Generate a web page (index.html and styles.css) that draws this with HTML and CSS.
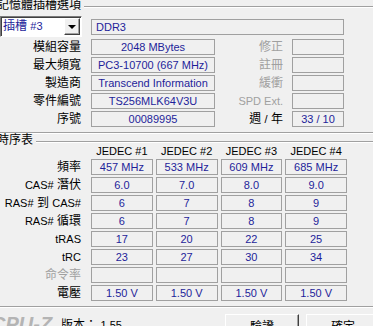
FILE: index.html
```html
<!DOCTYPE html>
<html lang="zh-Hant">
<head>
  <meta charset="UTF-8">
  <title>CPU-Z - SPD</title>
  <link rel="stylesheet" href="styles.css">
</head>
<body>
  <div class="window">

    <!-- 記憶體插槽選項 -->
    <section class="group slot-group">
      <div class="legend"><span>記憶體插槽選項</span></div>

      <div class="slot-row">
        <div class="combo">
          <div class="combo-value">插槽 <span class="en">#3</span></div>
          <div class="combo-btn"><span class="arrow"></span></div>
        </div>
        <div class="box left type">DDR3</div>
      </div>

      <div class="spd-grid">
        <div class="label">模組容量</div>
        <div class="box">2048 MBytes</div>
        <div class="label side off">修正</div>
        <div class="box"></div>

        <div class="label">最大頻寬</div>
        <div class="box">PC3-10700 (667 MHz)</div>
        <div class="label side off">註冊</div>
        <div class="box"></div>

        <div class="label">製造商</div>
        <div class="box">Transcend Information</div>
        <div class="label side off">緩衝</div>
        <div class="box"></div>

        <div class="label">零件編號</div>
        <div class="box">TS256MLK64V3U</div>
        <div class="label side off"><span class="en">SPD Ext.</span></div>
        <div class="box"></div>

        <div class="label">序號</div>
        <div class="box">00089995</div>
        <div class="label side">週 <span class="en">/</span> 年</div>
        <div class="box">33 / 10</div>
      </div>
    </section>

    <!-- 時序表 -->
    <section class="group timing-group">
      <div class="legend"><span>時序表</span></div>

      <div class="jedec-head">
        <div></div>
        <div>JEDEC #1</div>
        <div>JEDEC #2</div>
        <div>JEDEC #3</div>
        <div>JEDEC #4</div>
      </div>

      <div class="timing-grid">
        <div class="label">頻率</div>
        <div class="box">457 MHz</div>
        <div class="box">533 MHz</div>
        <div class="box">609 MHz</div>
        <div class="box">685 MHz</div>

        <div class="label"><span class="en">CAS#</span> 潛伏</div>
        <div class="box">6.0</div>
        <div class="box">7.0</div>
        <div class="box">8.0</div>
        <div class="box">9.0</div>

        <div class="label"><span class="en">RAS#</span> 到 <span class="en">CAS#</span></div>
        <div class="box">6</div>
        <div class="box">7</div>
        <div class="box">8</div>
        <div class="box">9</div>

        <div class="label"><span class="en">RAS#</span> 循環</div>
        <div class="box">6</div>
        <div class="box">7</div>
        <div class="box">8</div>
        <div class="box">9</div>

        <div class="label"><span class="en">tRAS</span></div>
        <div class="box">17</div>
        <div class="box">20</div>
        <div class="box">22</div>
        <div class="box">25</div>

        <div class="label"><span class="en">tRC</span></div>
        <div class="box">23</div>
        <div class="box">27</div>
        <div class="box">30</div>
        <div class="box">34</div>

        <div class="label off">命令率</div>
        <div class="box"></div>
        <div class="box"></div>
        <div class="box"></div>
        <div class="box"></div>

        <div class="label">電壓</div>
        <div class="box">1.50 V</div>
        <div class="box">1.50 V</div>
        <div class="box">1.50 V</div>
        <div class="box">1.50 V</div>
      </div>
    </section>

    <!-- Bas de fenêtre -->
    <footer class="footer">
      <div class="logo">CPU-Z</div>
      <div class="version">版本： <span class="en">1.55</span></div>
      <div class="buttons">
        <button class="btn">驗證</button>
        <button class="btn">確定</button>
      </div>
    </footer>

  </div>
</body>
</html>
```

FILE: styles.css
```css
/* Reset */
* {
  box-sizing: border-box;
  margin: 0;
  padding: 0;
}
html, body {
  width: 373px;
  height: 326px;
  overflow: hidden;
}
body {
  background: #f0f0f0;
  color: #000;
  font-family: "Liberation Sans", "Noto Sans CJK TC", sans-serif;
  font-size: 12px;
}
.window {
  width: 380px;
}
.en {
  font-size: 11px;
}

/* Titres de groupe avec ligne gravée */
.legend {
  display: flex;
  height: 14px;
  line-height: 14px;
  white-space: nowrap;
}
.legend span {
  margin-top: -2px;
  margin-left: -3px;
  padding-right: 3px;
}
.legend::after {
  content: "";
  flex: 1;
  height: 0;
  margin-top: 6px;
  border-top: 1px solid #a0a0a0;
  border-bottom: 1px solid #fff;
}

.group {
  padding-bottom: 5px;
  border-bottom: 1px solid #a0a0a0;
  box-shadow: 0 1px 0 #fff;
}

/* Champs de valeur */
.box {
  height: 16px;
  border: 1px solid #a0a0a0;
  line-height: 14px;
  font-size: 11px;
  color: #1e1e9a;
  text-align: center;
  white-space: nowrap;
  overflow: hidden;
}
.box.left {
  text-align: left;
  padding-left: 4px;
}
.label {
  text-align: right;
  line-height: 16px;
  white-space: nowrap;
}
.off {
  color: #a0a0a0;
}

/* Sélecteur d'emplacement */
.slot-row {
  display: flex;
  height: 21px;
  margin-top: 2px;
}
.combo {
  display: flex;
  width: 82px;
  height: 21px;
  background: #fff;
  border: 1px solid;
  border-color: #7a7a7a #fff #fff #7a7a7a;
  box-shadow: inset 1px 1px 0 #404040;
  padding: 1px 1px 1px 1px;
}
.combo-value {
  flex: 1;
  padding-left: 1px;
  line-height: 17px;
  color: #1e1e9a;
  white-space: nowrap;
}
.combo-btn {
  width: 16px;
  height: 17px;
  display: flex;
  align-items: center;
  justify-content: center;
  background: #f0f0f0;
  border: 1px solid;
  border-color: #fff #404040 #404040 #fff;
  box-shadow: inset -1px -1px 0 #a0a0a0;
}
.arrow {
  border-left: 4px solid transparent;
  border-right: 4px solid transparent;
  border-top: 4px solid #000;
}
.type {
  width: 253px;
  margin-left: 9px;
  margin-top: 3px;
}

/* Grille SPD */
.spd-grid {
  display: grid;
  grid-template-columns: 91px 124px 77px 52px;
  grid-auto-rows: 16px;
  row-gap: 2px;
  margin-top: 2px;
}
.spd-grid .label {
  padding-right: 10px;
}
.spd-grid .label.side {
  padding-right: 9px;
}

/* Tableau des timings */
.timing-group {
  margin-top: 2px;
}
.timing-group .legend {
  margin-bottom: -4px;
}
.jedec-head,
.timing-grid {
  display: grid;
  grid-template-columns: 88px repeat(4, 1fr);
  column-gap: 3px;
  width: 347px;
}
.jedec-head {
  height: 12px;
  line-height: 12px;
  font-size: 11px;
  text-align: center;
  white-space: nowrap;
}
.timing-grid {
  grid-auto-rows: 16px;
  row-gap: 2px;
  margin-top: 2px;
}
.timing-grid .label {
  padding-right: 7px;
}

/* Pied */
.footer {
  display: flex;
  align-items: flex-start;
  margin-top: 2px;
  padding-top: 5px;
}
.logo {
  margin-left: -9px;
  margin-top: -1px;
  font-family: "Liberation Sans", sans-serif;
  font-size: 20px;
  font-weight: bold;
  font-style: italic;
  line-height: 22px;
  color: #b4b4b4;
}
.version {
  margin-left: 9px;
  margin-top: 3px;
  line-height: 16px;
  white-space: nowrap;
}
.buttons {
  display: flex;
  gap: 7px;
  margin-left: auto;
}
.btn {
  width: 74px;
  height: 23px;
  background: #f0f0f0;
  border: 1px solid;
  border-color: #fff #404040 #404040 #fff;
  box-shadow: inset -1px -1px 0 #a0a0a0;
  font-family: "Noto Sans CJK TC", sans-serif;
  font-size: 12px;
  line-height: 21px;
  color: #000;
  text-align: center;
}
```
